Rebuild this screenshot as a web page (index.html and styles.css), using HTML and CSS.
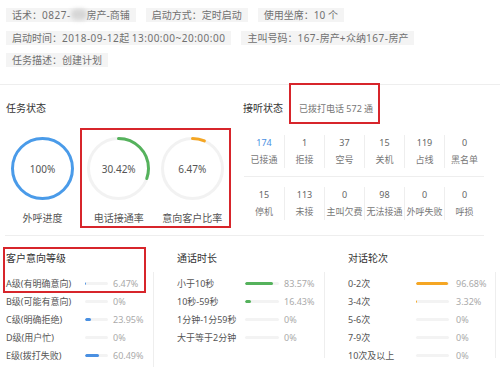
FILE: index.html
```html
<!DOCTYPE html>
<html lang="zh-CN">
<head>
<meta charset="utf-8">
<title>任务详情</title>
<link rel="stylesheet" href="styles.css">
</head>
<body>
<div class="top">
  <div class="tag-row">
    <span class="tag">话术：<span class="n">0827-</span><span class="blur"></span>房产-商铺</span>
    <span class="tag">启动方式：定时启动</span>
    <span class="tag">使用坐席：10 个</span>
  </div>
  <div class="tag-row">
    <span class="tag">启动时间：<span class="n">2018-09-12</span>起 <span class="n">13:00:00~20:00:00</span></span>
    <span class="tag">主叫号码：<span class="n">167-</span>房产<span class="n">+</span>众纳<span class="n">167-</span>房产</span>
  </div>
  <div class="tag-row">
    <span class="tag">任务描述：创建计划</span>
  </div>
</div>

<div class="status">
  <div class="task">
    <div class="section-title">任务状态</div>
    <div class="rings">
      <div class="ring-item first">
        <div class="ring">
          <svg width="63" height="63" viewBox="0 0 63 63"><circle cx="31.5" cy="31.5" r="30" fill="none" stroke="#4a9be9" stroke-width="3"/></svg>
          <span class="ring-val">100%</span>
        </div>
        <div class="ring-label">外呼进度</div>
      </div>
      <div class="ring-box">
        <div class="ring-item">
          <div class="ring">
            <svg width="63" height="63" viewBox="0 0 63 63"><circle cx="31.5" cy="31.5" r="30" fill="none" stroke="#f2f2f2" stroke-width="3"/><circle cx="31.5" cy="31.5" r="30" fill="none" stroke="#55b25c" stroke-width="3" stroke-linecap="round" stroke-dasharray="57.3 188.5" transform="rotate(-90 31.5 31.5)"/></svg>
            <span class="ring-val">30.42%</span>
          </div>
          <div class="ring-label">电话接通率</div>
        </div>
        <div class="ring-item">
          <div class="ring">
            <svg width="63" height="63" viewBox="0 0 63 63"><circle cx="31.5" cy="31.5" r="30" fill="none" stroke="#f2f2f2" stroke-width="3"/><circle cx="31.5" cy="31.5" r="30" fill="none" stroke="#f5a623" stroke-width="3" stroke-linecap="round" stroke-dasharray="12.2 188.5" transform="rotate(-90 31.5 31.5)"/></svg>
            <span class="ring-val">6.47%</span>
          </div>
          <div class="ring-label">意向客户比率</div>
        </div>
      </div>
    </div>
  </div>

  <div class="answer">
    <div class="answer-head">
      <div class="section-title answer-title">接听状态</div>
      <div class="dial-box">已拨打电话 572 通</div>
    </div>
    <div class="stats">
      <div class="stat-row first">
        <div class="stat"><span class="num blue">174</span><span class="lbl">已接通</span></div>
        <div class="stat"><span class="num">1</span><span class="lbl">拒接</span></div>
        <div class="stat"><span class="num">37</span><span class="lbl">空号</span></div>
        <div class="stat"><span class="num">15</span><span class="lbl">关机</span></div>
        <div class="stat"><span class="num">119</span><span class="lbl">占线</span></div>
        <div class="stat"><span class="num">0</span><span class="lbl">黑名单</span></div>
      </div>
      <div class="stat-row second">
        <div class="stat"><span class="num">15</span><span class="lbl">停机</span></div>
        <div class="stat"><span class="num">113</span><span class="lbl">未接</span></div>
        <div class="stat"><span class="num">0</span><span class="lbl">主叫欠费</span></div>
        <div class="stat"><span class="num">98</span><span class="lbl">无法接通</span></div>
        <div class="stat"><span class="num">0</span><span class="lbl">外呼失败</span></div>
        <div class="stat"><span class="num">0</span><span class="lbl">呼损</span></div>
      </div>
    </div>
  </div>
</div>

<div class="dist">
  <div class="col c1">
    <div class="col-title">客户意向等级</div>
    <div class="list">
      <div class="row"><span class="name">A级(有明确意向)</span><span class="bar"><span class="fill blue-bg" style="width:6.47%"></span></span><span class="pct">6.47%</span></div>
      <div class="row"><span class="name">B级(可能有意向)</span><span class="bar"><span class="fill blue-bg" style="width:0%"></span></span><span class="pct">0%</span></div>
      <div class="row"><span class="name">C级(明确拒绝)</span><span class="bar"><span class="fill blue-bg" style="width:23.95%"></span></span><span class="pct">23.95%</span></div>
      <div class="row"><span class="name">D级(用户忙)</span><span class="bar"><span class="fill blue-bg" style="width:0%"></span></span><span class="pct">0%</span></div>
      <div class="row"><span class="name">E级(拨打失败)</span><span class="bar"><span class="fill blue-bg" style="width:60.49%"></span></span><span class="pct">60.49%</span></div>
    </div>
    <div class="mark"></div>
  </div>
  <div class="col c2">
    <div class="col-title">通话时长</div>
    <div class="list">
      <div class="row"><span class="name">小于10秒</span><span class="bar"><span class="fill green-bg" style="width:83.57%"></span></span><span class="pct">83.57%</span></div>
      <div class="row"><span class="name">10秒-59秒</span><span class="bar"><span class="fill green-bg" style="width:16.43%"></span></span><span class="pct">16.43%</span></div>
      <div class="row"><span class="name">1分钟-1分59秒</span><span class="bar"><span class="fill green-bg" style="width:0%"></span></span><span class="pct">0%</span></div>
      <div class="row"><span class="name">大于等于2分钟</span><span class="bar"><span class="fill green-bg" style="width:0%"></span></span><span class="pct">0%</span></div>
    </div>
  </div>
  <div class="col c3">
    <div class="col-title">对话轮次</div>
    <div class="list">
      <div class="row"><span class="name">0-2次</span><span class="bar"><span class="fill orange-bg" style="width:96.68%"></span></span><span class="pct">96.68%</span></div>
      <div class="row"><span class="name">3-4次</span><span class="bar"><span class="fill orange-bg" style="width:3.32%"></span></span><span class="pct">3.32%</span></div>
      <div class="row"><span class="name">5-6次</span><span class="bar"><span class="fill orange-bg" style="width:0%"></span></span><span class="pct">0%</span></div>
      <div class="row"><span class="name">7-9次</span><span class="bar"><span class="fill orange-bg" style="width:0%"></span></span><span class="pct">0%</span></div>
      <div class="row"><span class="name">10次及以上</span><span class="bar"><span class="fill orange-bg" style="width:0%"></span></span><span class="pct">0%</span></div>
    </div>
  </div>
</div>
</body>
</html>
```
FILE: styles.css
```css
* { box-sizing: border-box; margin: 0; padding: 0; }

body {
  width: 500px;
  height: 367px;
  overflow: hidden;
  background: #fff;
  font-family: "Noto Sans", "Noto Sans CJK SC", "Microsoft YaHei", sans-serif;
  font-size: 10px;
  color: #555;
}

/* top info tags */
.top {
  height: 85px;
  padding: 8px 6px 0;
  border-bottom: 1px solid #eeeeee;
  display: flex;
  flex-direction: column;
  gap: 8.5px;
}
.tag-row { display: flex; gap: 10px; height: 14px; }
.tag {
  background: #f4f4f4;
  padding: 0 6px;
  line-height: 14px;
  font-size: 10px;
  color: #707070;
  white-space: nowrap;
}
.tag .n { letter-spacing: 0.5px; }
.blur {
  display: inline-block;
  width: 16px;
  height: 11px;
  vertical-align: -1px;
  background: #d6d6d6;
  border-radius: 5px;
  filter: blur(2px);
}

/* status section */
.status {
  display: flex;
  height: 151px;
  margin: 0 16px 0 5px;
  border-bottom: 1px solid #eeeeee;
}
.task { width: 238px; padding-top: 16px; }
.section-title {
  font-size: 10px;
  line-height: 14px;
  color: #333;
  padding-left: 1px;
  white-space: nowrap;
}
.rings { display: flex; align-items: flex-start; margin-top: 13px; }
.ring-item {
  width: 73.5px;
  display: flex;
  flex-direction: column;
  align-items: center;
  padding-top: 7px;
}
.ring-item.first { width: 75px; padding-top: 9px; }
.ring-box {
  display: flex;
  border: 2px solid #d7252b;
  padding-bottom: 2px;
}
.ring { display: grid; place-items: center; }
.ring > * { grid-area: 1 / 1; }
.ring svg { display: block; }
.ring-val { font-size: 10px; color: #555; }
.ring-label { margin-top: 12px; line-height: 12px; font-size: 10px; color: #555; white-space: nowrap; }

.answer { flex: 1; }
.answer-head { display: flex; align-items: flex-start; margin-top: -2px; }
.answer-title { margin-top: 18px; padding-left: 0; }
.dial-box {
  margin-left: 6px;
  width: 91px;
  height: 41px;
  border: 2px solid #d7252b;
  padding: 18px 0 0 8px;
  font-size: 9px;
  line-height: 12px;
  color: #777;
  white-space: nowrap;
}
.stats { margin-top: 11px; margin-left: 1px; width: 240px; }
.stat-row { display: grid; grid-template-columns: repeat(6, 40px); }
.stat-row.first { padding-bottom: 8px; border-bottom: 1px solid #eeeeee; }
.stat-row.second { padding-top: 10px; }
.stat {
  height: 33px;
  padding-top: 1px;
  border-left: 1px solid #eeeeee;
  display: flex;
  flex-direction: column;
  align-items: center;
}
.stat:first-child { border-left: none; }
.num { line-height: 14px; font-size: 9px; color: #666; }
.num.blue { color: #4a90e2; }
.lbl { margin-top: 3px; line-height: 14px; font-size: 9px; color: #777; white-space: nowrap; }

/* distribution section */
.dist {
  display: grid;
  grid-template-columns: repeat(3, 171px);
  padding-left: 4px;
  padding-top: 15px;
}
.col { position: relative; }
.col-title { font-size: 10px; line-height: 14px; color: #333; padding-left: 2px; }
.list {
  margin-top: 7px;
  width: 150px;
  height: 86px;
  padding: 2px 0 0 2px;
  border-right: 1px solid #eeeeee;
}
.c1 .list { height: 96px; }
.row { display: flex; align-items: center; height: 18px; }
.name { width: 68px; font-size: 9px; color: #555; white-space: nowrap; }
.c1 .name { width: 79px; }
.bar {
  display: block;
  height: 3px;
  background: #f3f3f3;
  border-radius: 2px;
  overflow: hidden;
}
.c1 .bar { width: 23px; }
.c2 .bar { width: 34px; }
.c3 .bar { width: 33px; }
.fill { display: block; height: 100%; border-radius: 2px; }
.blue-bg { background: #4a90e2; }
.green-bg { background: #55b25c; }
.orange-bg { background: #f5a623; }
.pct { margin-left: 5px; font-size: 9px; color: #aaa; white-space: nowrap; }
.c3 .pct { margin-left: 7px; }

.mark {
  position: absolute;
  left: -1px;
  top: -4px;
  width: 143px;
  height: 46px;
  border: 2px solid #d7252b;
}
```
